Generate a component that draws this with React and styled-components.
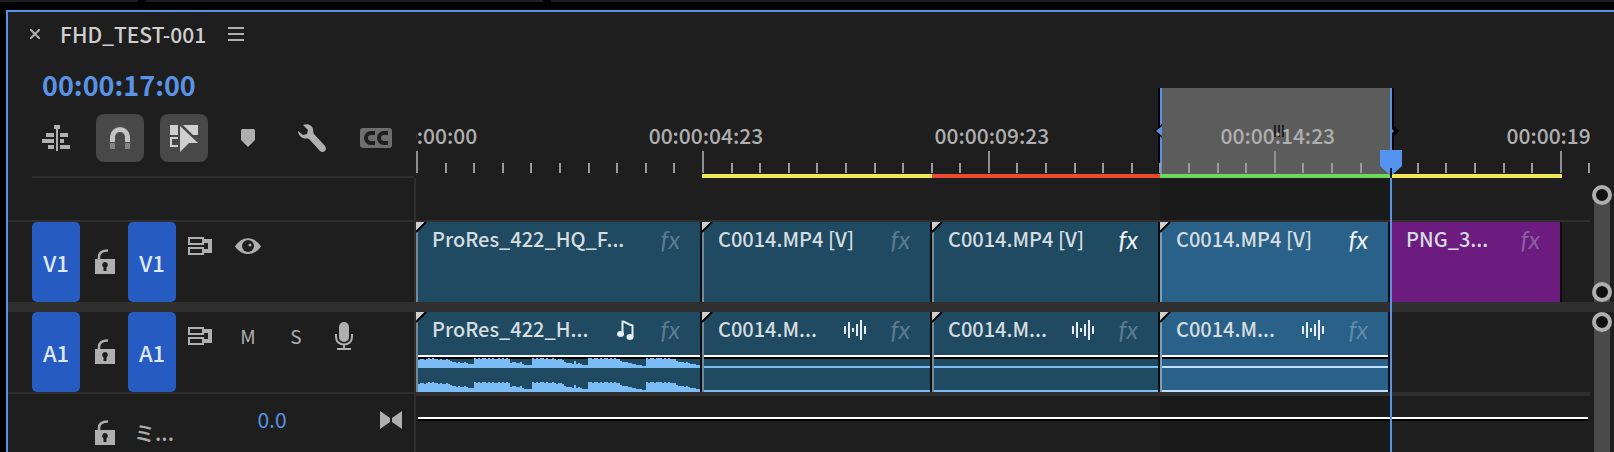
import styled, { createGlobalStyle, css } from "styled-components";

const GlobalStyle = createGlobalStyle`
  * { box-sizing: border-box; }
  body {
    margin: 0;
    background: #000;
    color: #afafaf;
    font-family: "Noto Sans CJK JP", sans-serif;
    font-size: 21px;
    font-weight: 500;
    line-height: 28px;
  }
  button {
    border: 0;
    padding: 0;
    background: none;
    color: inherit;
    font: inherit;
    cursor: pointer;
  }
  svg { display: block; }
`;

const accent = "#5a93e6";
const line = "#2f2f2f";

const Page = styled.div`
  display: flex;
  flex-direction: column;
  height: 100vh;
  overflow: hidden;
`;

const OtherPanels = styled.div`
  display: grid;
  grid-template-columns: 138px 397px 1fr;
  column-gap: 8px;
  flex: none;
  height: 2px;
  margin-bottom: 8px;
`;

const OtherPanel = styled.div`
  background: #1e1e1e;
`;

const Panel = styled.main`
  position: relative;
  flex: 1;
  display: flex;
  flex-direction: column;
  min-height: 0;
  margin-left: 6px;
  border-top: 2px solid ${accent};
  border-left: 2px solid ${accent};
  background: #1e1e1e;
`;

const Area = styled.section`
  position: relative;
  flex: ${(props) => (props.$fill ? 1 : "none")};
  display: grid;
  grid-template-columns: 408px minmax(0, 1fr) 24px;
`;

const Splitter = styled.div`
  flex: none;
  height: 10px;
  background: ${line};
`;

/* ---- sequence header ---- */

const Header = styled.header`
  padding-left: 16px;
`;

const TitleBar = styled.div`
  display: flex;
  align-items: center;
  height: 46px;
  padding-bottom: 2px;
`;

const TitleButton = styled.button`
  display: flex;
  justify-content: center;
  width: ${(props) => props.$width};
`;

const Title = styled.h1`
  margin: 0 22px 0 15px;
  color: #cfcfcf;
  font-size: 21px;
  font-weight: 500;
`;

const Timecode = styled.button`
  display: flex;
  align-items: center;
  height: 56px;
  padding-bottom: 2px;
  margin-left: 18px;
  color: ${accent};
  font-size: 27px;
  font-weight: 700;
`;

const Toolbar = styled.div`
  display: flex;
  gap: 16px;
  margin-right: 2px;
  margin-left: 8px;
  padding-bottom: 14px;
  border-bottom: 2px solid ${line};
`;

const Tool = styled.button`
  display: flex;
  align-items: center;
  justify-content: center;
  width: 48px;
  height: 48px;
  border-radius: 8px;
  background: ${(props) => (props.$active ? "#484848" : "none")};
`;

/* ---- track heads ---- */

const Heads = styled.div`
  display: flex;
  flex-direction: column;
  border-right: 2px solid ${line};
`;

const Spacer = styled.div`
  height: 42px;
`;

const Head = styled.div`
  display: flex;
  align-items: flex-start;
  padding-left: 24px;
  ${(props) => props.$lineTop && css`border-top: 2px solid ${line};`}
`;

const Target = styled.button`
  width: 48px;
  height: 80px;
  border-radius: 5px;
  background: #265bc1;
  color: #dfe8f8;
  font-size: 22px;
`;

const HeadButton = styled.button`
  display: flex;
  align-items: center;
  justify-content: center;
  width: 48px;
  height: ${(props) => props.$height || "48px"};
  font-size: 19px;
  font-weight: 400;
  white-space: nowrap;
`;

const LockButton = styled(HeadButton)`
  padding-left: 2px;
`;

const MixName = styled(HeadButton)`
  padding: 0 0 2px 4px;
  font-size: 21px;
  font-weight: 500;
`;

const Volume = styled(HeadButton)`
  margin-left: 72px;
  padding-bottom: 2px;
  color: ${accent};
  font-size: 21px;
`;

const Keyframes = styled(HeadButton)`
  width: 46px;
  margin-left: auto;
`;

/* ---- ruler ---- */

const Ruler = styled.div`
  position: relative;
  display: flex;
  flex-direction: column;
  justify-content: flex-end;
  overflow: hidden;
`;

const Ticks = styled.div`
  position: relative;
  display: flex;
  align-items: flex-end;
  height: 50px;
  margin-bottom: 1px;
`;

const Tick = styled.div`
  position: relative;
  flex: 0 0 calc(100% * 28.6 / 1174);
  height: ${(props) => (props.$major ? "22px" : "10px")};
  border-left: 2px solid ${(props) => (props.$major ? "#8f8f8f" : "#9a9a9a")};
`;

const TickLabel = styled.span`
  position: absolute;
  bottom: 24px;
  left: 2px;
  transform: translateX(-50%);
  white-space: nowrap;
`;

const columns = css`
  display: grid;
  grid-template-columns: 286fr 230fr 228fr 230fr 172fr 28fr;
`;

const RenderBar = styled.div`
  ${columns}
  position: relative;
  height: 4px;
`;

const RenderState = styled.div`
  background: ${(props) => props.$color};
`;

const InOut = styled.div`
  position: absolute;
  top: 76px;
  bottom: 4px;
  left: calc(100% * 744 / 1174);
  width: calc(100% * 230 / 1174 + 2px);
  display: flex;
  align-items: flex-start;
  justify-content: center;
  padding: 37px 0 0 6px;
  border: solid ${accent};
  border-width: 0 2px;
  background: #5c5c5c;
  box-shadow: -2px 0 #000, 2px 0 #000;
`;

const Bracket = styled.svg`
  position: absolute;
  top: 36px;
  ${(props) => (props.$end ? "right: -9px;" : "left: -8px;")}
`;

const Shade = styled.div`
  position: absolute;
  top: 0;
  bottom: 0;
  left: calc(100% * 744 / 1174);
  width: calc(100% * 230 / 1174);
  background: #1a1a1a;
`;

const PlayheadLayer = styled.div`
  position: absolute;
  z-index: 2;
  top: 138px;
  right: 24px;
  bottom: 0;
  left: 408px;
  pointer-events: none;
`;

const Playhead = styled.div`
  position: absolute;
  top: 0;
  bottom: 0;
  left: calc(100% * 974 / 1174 - 10px);
  display: flex;
  flex-direction: column;
  align-items: center;
  width: 22px;
`;

const PlayheadLine = styled.div`
  flex: 1;
  width: 2px;
  background: ${accent};
`;

/* ---- lanes and clips ---- */

const Lanes = styled.div`
  position: relative;
  display: flex;
  flex-direction: column;
`;

const Lane = styled.div`
  ${columns}
  position: relative;
  height: ${(props) => (props.$lineTop ? "82px" : "80px")};
  ${(props) => props.$lineTop && css`border-top: 2px solid ${line};`}
`;

const clipColors = {
  normal: ["#1f4a62", "#6f8a98"],
  selected: ["#2a6188", "#7c9fb8"],
  graphic: ["#6c1b7f", "#6c1b7f"],
};

const ClipBox = styled.div`
  position: relative;
  display: flex;
  flex-direction: column;
  min-width: 0;
  border-right: 2px solid #0c0c0c;
  border-left: 2px solid ${(props) => clipColors[props.$kind][1]};
  background: ${(props) => clipColors[props.$kind][0]};
`;

const Corner = styled.svg`
  position: absolute;
  top: 0;
  left: -2px;
`;

const ClipTitle = styled.div`
  display: flex;
  align-items: flex-start;
  height: ${(props) => (props.$audio ? "43px" : "80px")};
  padding: 3px 20px 0 14px;
`;

const ClipName = styled.span`
  flex: 1;
  overflow: hidden;
  color: #d6dde0;
  font-size: 20px;
  white-space: nowrap;
`;

const ClipIcon = styled.span`
  display: flex;
  justify-content: center;
  width: 22px;
  margin: 5px 24px 0 0;
`;

const Fx = styled.span`
  color: ${(props) => (props.$on ? "#eef3f5" : "rgba(190, 205, 220, 0.4)")};
  font-family: Lato, sans-serif;
  font-size: 25px;
  font-style: italic;
  font-weight: 400;
`;

const Gain = styled.div`
  flex: none;
  height: 4px;
  border-top: 2px solid #fff;
  background: #000;
`;

const Channel = styled.div`
  display: flex;
  align-items: flex-end;
  height: ${(props) => (props.$upper ? "9px" : "24px")};
  border-bottom: 2px solid ${(props) => (props.$selected ? "#bfe0fa" : "#7bbcf5")};
`;

const MixLane = styled.div`
  position: relative;
  height: 60px;
  padding-top: 21px;
  padding-right: 2px;
  padding-left: 2px;
  border-top: 4px solid ${line};
`;

/* ---- zoom scrollers ---- */

const Scroller = styled.div`
  display: flex;
  flex-direction: column;
  align-items: center;
  justify-content: space-between;
  margin-top: ${(props) => props.$top};
  background: linear-gradient(#4a4a4a, #4a4a4a) center 8px / 16px 100% no-repeat;
`;

const Knob = styled.button`
  width: 20px;
  height: 20px;
  border: 4px solid #afafaf;
  border-radius: 50%;
  background: #111;
`;

/* ---- icons ---- */

const NestIcon = () => (
  <svg width="28" height="26" viewBox="0 0 28 26" fill="currentColor" aria-hidden="true">
    <path d="M12 0h6v4h-2v22h-2V4h-2zM4 8h8v4H4zM18 8h8v4h-8zM0 14h12v4H0zM18 14h4v4h-4zM6 20h6v4H6zM18 20h10v4H18z" />
  </svg>
);

const MagnetIcon = () => (
  <svg width="20" height="22" viewBox="0 0 20 22" aria-hidden="true">
    <path d="M0 15V10a10 10 0 0 1 20 0v5h-5V10a5 5 0 0 0-10 0v5z" fill="#c4c4c4" />
    <path d="M0 16h5v6H0zM15 16h5v6h-5z" fill="#858585" />
  </svg>
);

const LinkedSelectionIcon = () => (
  <svg width="28" height="28" viewBox="0 0 28 28" fill="#d0d0d0" aria-hidden="true">
    <path d="M0 1h8v10H0zM0 13h8v2H2v6h6v2H0zM13 1h15v10h-5z" />
    <path d="M10 2l18 17h-9l-9 9z" />
  </svg>
);

const MarkerIcon = () => (
  <svg width="14" height="18" viewBox="0 0 14 18" fill="currentColor" aria-hidden="true">
    <path d="M1 0h12l1 1v10l-7 7-7-7V1z" />
  </svg>
);

const WrenchIcon = () => (
  <svg width="28" height="29" viewBox="0 0 28 29" fill="currentColor" aria-hidden="true">
    <path d="M5 1c4-2 9 0 10 4 .5 2 0 4 1 5l11 12c3 4-2 8-5 5L11 15c-2-1-4 0-6-1-3-1-5-4-5-7l5 4 4-1 1-4z" />
  </svg>
);

const CaptionIcon = () => (
  <svg width="32" height="20" viewBox="0 0 32 20" aria-hidden="true">
    <rect width="32" height="20" rx="3" fill="#6e6e6e" />
    <path d="M15 5H11a5 5 0 0 0 0 10h4M28 5h-4a5 5 0 0 0 0 10h4" fill="none" stroke="#1e1e1e" strokeWidth="4" />
  </svg>
);

const LockIcon = () => (
  <svg width="20" height="26" viewBox="0 0 20 26" aria-hidden="true">
    <path d="M4 11V8c0-4 3-6.500 9-6.500" fill="none" stroke="currentColor" strokeWidth="2.500" />
    <path d="M0 10h20v15H0zM10 13a3 3 0 0 0-1.500 5.500V22h3v-3.500A3 3 0 0 0 10 13" fill="currentColor" fillRule="evenodd" />
  </svg>
);

const SyncIcon = () => (
  <svg width="24" height="18" viewBox="0 0 24 18" fill="currentColor" aria-hidden="true">
    <path
      d="M0 0h16v2h8v14h-8v2H0v-8h16v2h4V6h-4v2H0zM2 2v4h12V2zM2 12v4h12v-4z"
      fillRule="evenodd"
    />
  </svg>
);

const EyeIcon = () => (
  <svg width="26" height="16" viewBox="0 0 26 16" aria-hidden="true">
    <path d="M0 8.500C7-2.500 19-2.500 26 8.500 19 18.500 7 18.500 0 8.500z" fill="currentColor" />
    <circle cx="13" cy="8" r="6" fill="#1e1e1e" />
    <circle cx="15" cy="7" r="1.500" fill="currentColor" />
  </svg>
);

const MicIcon = () => (
  <svg width="18" height="28" viewBox="0 0 18 28" aria-hidden="true">
    <rect x="4" width="10" height="20" rx="5" fill="currentColor" />
    <path d="M1 12v3c0 10 16 10 16 0v-3M9 22v5M2 27h14" fill="none" stroke="currentColor" strokeWidth="2" />
  </svg>
);

const KeyframeIcon = () => (
  <svg width="22" height="18" viewBox="0 0 22 18" fill="currentColor" aria-hidden="true">
    <path d="M0 0l10 7v4L0 18zM22 0L12 7v4l10 7z" />
  </svg>
);

const MusicIcon = () => (
  <svg width="17" height="20" viewBox="0 0 17 20" aria-hidden="true">
    <path d="M5.500 15V1.500c3 0 4 2.500 10 4V17" fill="none" stroke="#e6edf0" strokeWidth="2" />
    <ellipse cx="3.500" cy="14" rx="3.500" ry="3" fill="#e6edf0" />
    <ellipse cx="13" cy="17" rx="3.500" ry="3" fill="#e6edf0" />
  </svg>
);

const SoundIcon = () => (
  <svg width="22" height="20" viewBox="0 0 22 20" fill="#e6edf0" aria-hidden="true">
    <path d="M0 6h2v8H0zM4 2h2v16H4zM8 8h2v4H8zM12 4h2v12h-2zM16 0h2v20h-2zM20 6h2v8h-2z" />
  </svg>
);

// one beat of the music: peak height for each 2px column
const beats = [
  [6, 7, 7, 6, 7, 8, 7, 8, 7, 7, 6, 7, 6, 6, 7, 6, 5, 4, 4, 3, 4, 3, 3, 4, 3, 2, 2, 2],
  [8, 7, 8, 7, 8, 8, 7, 8, 7, 8, 7, 7, 8, 7, 8, 7, 8, 7, 3, 4, 4, 3, 3, 4, 2, 1, 1, 1, 1],
  [8, 7, 8, 7, 8, 8, 7, 8, 7, 7, 8, 7, 6, 7, 7, 6, 4, 3, 3, 3, 2, 5, 2, 3, 2, 1, 1, 1],
  [8, 8, 7, 8, 8, 7, 8, 7, 8, 8, 7, 8, 7, 8, 7, 7, 5, 4, 4, 4, 3, 3, 2, 2, 1, 1, 1, 0, 0],
  [8, 7, 8, 8, 7, 8, 8, 8, 7, 8, 7, 8, 7, 7, 7, 5, 4, 4, 4, 3, 4, 3, 2, 2, 2, 1, 1],
].flat();

const Waveform = () => (
  <svg width="100%" height="8" viewBox={`0 0 ${beats.length} 8`} preserveAspectRatio="none" aria-hidden="true">
    <path
      d={`M0 8${beats.map((peak) => `V${8 - peak}h1`).join("")}V8z`}
      fill="#7bbcf5"
      shapeRendering="crispEdges"
    />
  </svg>
);

const videoClips = [
  { name: "ProRes_422_HQ_F...", kind: "normal" },
  { name: "C0014.MP4 [V]", kind: "normal" },
  { name: "C0014.MP4 [V]", kind: "normal", fx: true },
  { name: "C0014.MP4 [V]", kind: "selected", fx: true },
  { name: "PNG_3...", kind: "graphic" },
];

const audioClips = [
  { name: "ProRes_422_H...", kind: "normal", music: true },
  { name: "C0014.M...", kind: "normal" },
  { name: "C0014.M...", kind: "normal" },
  { name: "C0014.M...", kind: "selected" },
];

const renderStates = ["transparent", "#f1e94e", "#eb4a33", "#6cdb5c", "#f1e94e"];

const labels = ["00:00:00:00", "00:00:04:23", "00:00:09:23", "00:00:14:23", "00:00:19:23"];

const Clip = ({ clip, audio }) => (
  <ClipBox $kind={clip.kind}>
    {clip.kind !== "graphic" && (
      <Corner width="11" height="11" viewBox="0 0 11 11" aria-hidden="true">
        <path d="M0 0h9L0 9z" fill="#cfcfcf" />
        <path d="M0 10L10 0" stroke="#000" strokeWidth="2" />
      </Corner>
    )}
    <ClipTitle $audio={audio}>
      <ClipName>{clip.name}</ClipName>
      {audio && <ClipIcon>{clip.music ? <MusicIcon /> : <SoundIcon />}</ClipIcon>}
      <Fx $on={clip.fx}>fx</Fx>
    </ClipTitle>
    {audio && (
      <>
        <Gain />
        <Channel $upper $selected={clip.kind === "selected"}>{clip.music && <Waveform />}</Channel>
        <Channel $selected={clip.kind === "selected"}>{clip.music && <Waveform />}</Channel>
      </>
    )}
  </ClipBox>
);

const App = () => {
  return (
    <Page>
      <GlobalStyle />
      <OtherPanels>
        <OtherPanel />
        <OtherPanel />
        <OtherPanel />
      </OtherPanels>
      <Panel>
        <Area>
          <Header>
            <TitleBar>
              <TitleButton $width="21px" aria-label="Close">
                <svg width="10" height="10" viewBox="0 0 10 10" stroke="currentColor" strokeWidth="2">
                  <path d="M0 0l10 10M10 0L0 10" />
                </svg>
              </TitleButton>
              <Title>FHD_TEST-001</Title>
              <TitleButton $width="16px" aria-label="Panel menu">
                <svg width="16" height="14" viewBox="0 0 16 14" fill="currentColor">
                  <path d="M0 0h16v2H0zM0 6h16v2H0zM0 12h16v2H0z" />
                </svg>
              </TitleButton>
            </TitleBar>
            <Timecode>00:00:17:00</Timecode>
            <Toolbar>
              <Tool aria-label="Nest sequences"><NestIcon /></Tool>
              <Tool $active aria-label="Snap"><MagnetIcon /></Tool>
              <Tool $active aria-label="Linked selection"><LinkedSelectionIcon /></Tool>
              <Tool aria-label="Add marker"><MarkerIcon /></Tool>
              <Tool aria-label="Display settings"><WrenchIcon /></Tool>
              <Tool aria-label="Captions"><CaptionIcon /></Tool>
            </Toolbar>
          </Header>
          <Ruler>
            <InOut>
              <Bracket width="8" height="14" viewBox="0 0 8 14" aria-hidden="true">
                <path d="M8 0L0 7l8 7z" fill="#000" />
                <path d="M8 2L2 7l6 5z" fill={accent} />
              </Bracket>
              <svg width="10" height="12" viewBox="0 0 10 12" fill="#222" aria-hidden="true">
                <path d="M0 0h2v12H0zM4 0h2v12H4zM8 0h2v12H8z" />
              </svg>
              <Bracket $end width="8" height="14" viewBox="0 0 8 14" aria-hidden="true">
                <path d="M1 0l7 7-7 7z" fill="#000" />
                <path d="M0 4l3 3-3 3z" fill={accent} />
              </Bracket>
            </InOut>
            <Ticks>
              {Array.from({ length: 41 }, (_, i) => (
                <Tick key={i} $major={i % 10 === 0}>
                  {i % 10 === 0 && <TickLabel>{labels[i / 10]}</TickLabel>}
                </Tick>
              ))}
              <Tick />
            </Ticks>
            <RenderBar>
              {renderStates.map((color, i) => (
                <RenderState key={i} $color={color} />
              ))}
            </RenderBar>
          </Ruler>
        </Area>

        <Area>
          <Heads>
            <Spacer />
            <Head $lineTop>
              <Target>V1</Target>
              <LockButton $height="80px" aria-label="Lock V1"><LockIcon /></LockButton>
              <Target>V1</Target>
              <HeadButton aria-label="Sync lock V1"><SyncIcon /></HeadButton>
              <HeadButton aria-label="Track output V1"><EyeIcon /></HeadButton>
            </Head>
          </Heads>
          <Lanes>
            <Shade />
            <Spacer />
            <Lane $lineTop>
              {videoClips.map((clip, i) => (
                <Clip key={i} clip={clip} />
              ))}
            </Lane>
          </Lanes>
          <Scroller $top="7px">
            <Knob aria-label="Video zoom start" />
            <Knob aria-label="Video zoom end" />
          </Scroller>
        </Area>

        <Splitter />

        <Area $fill>
          <Heads>
            <Head>
              <Target>A1</Target>
              <LockButton $height="80px" aria-label="Lock A1"><LockIcon /></LockButton>
              <Target>A1</Target>
              <HeadButton aria-label="Sync lock A1"><SyncIcon /></HeadButton>
              <HeadButton>M</HeadButton>
              <HeadButton>S</HeadButton>
              <HeadButton aria-label="Record voice-over"><MicIcon /></HeadButton>
            </Head>
            <Head $lineTop>
              <HeadButton as="span" />
              <LockButton $height="78px" aria-label="Lock mix"><LockIcon /></LockButton>
              <MixName $height="78px">ミ...</MixName>
              <Volume $height="52px">0.0</Volume>
              <Keyframes $height="52px" aria-label="Keyframes"><KeyframeIcon /></Keyframes>
            </Head>
          </Heads>
          <Lanes>
            <Shade />
            <Lane>
              {audioClips.map((clip, i) => (
                <Clip key={i} clip={clip} audio />
              ))}
            </Lane>
            <MixLane>
              <Gain />
            </MixLane>
          </Lanes>
          <Scroller $top="0">
            <Knob aria-label="Audio zoom start" />
          </Scroller>
        </Area>

        <PlayheadLayer>
          <Playhead>
            <svg width="22" height="28" viewBox="0 0 22 28" aria-hidden="true">
              <path d="M0 0h22v16L11 26 0 16z" fill="#5594ee" />
              <path d="M10 18h2v10h-2z" fill="#0c1420" />
            </svg>
            <PlayheadLine />
          </Playhead>
        </PlayheadLayer>
      </Panel>
    </Page>
  );
};

export default App;
